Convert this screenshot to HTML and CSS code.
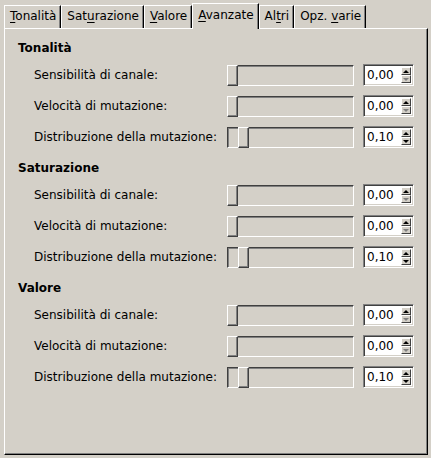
FILE: index.html
```html
<!DOCTYPE html>
<html lang="it">
<head>
<meta charset="utf-8">
<title>Avanzate</title>
<link rel="stylesheet" href="styles.css">
</head>
<body>
<div class="window">
  <div class="tabs">
    <div class="tab"><span class="u">T</span>onalità</div>
    <div class="tab">Sat<span class="u">u</span>razione</div>
    <div class="tab"><span class="u">V</span>alore</div>
    <div class="tab active"><span class="u">A</span>vanzate</div>
    <div class="tab">Al<span class="u">t</span>ri</div>
    <div class="tab">Opz. <span class="u">v</span>arie</div>
  </div>
  <div class="panel">
    <section class="group">
      <div class="heading">Tonalità</div>
      <div class="rows">
        <div class="row">
          <span class="label">Sensibilità di canale:</span>
          <div class="slider"><div class="handle" style="left:-1px"></div></div>
          <div class="spin"><span class="value">0,00</span><div class="btns"><div class="btn up"><i class="tri-up"></i></div><div class="btn dn off"><i class="tri-dn"></i></div></div></div>
        </div>
        <div class="row">
          <span class="label">Velocità di mutazione:</span>
          <div class="slider"><div class="handle" style="left:-1px"></div></div>
          <div class="spin"><span class="value">0,00</span><div class="btns"><div class="btn up"><i class="tri-up"></i></div><div class="btn dn off"><i class="tri-dn"></i></div></div></div>
        </div>
        <div class="row">
          <span class="label">Distribuzione della mutazione:</span>
          <div class="slider"><div class="handle" style="left:10px"></div></div>
          <div class="spin"><span class="value">0,10</span><div class="btns"><div class="btn up"><i class="tri-up"></i></div><div class="btn dn"><i class="tri-dn"></i></div></div></div>
        </div>
      </div>
    </section>
    <section class="group">
      <div class="heading">Saturazione</div>
      <div class="rows">
        <div class="row">
          <span class="label">Sensibilità di canale:</span>
          <div class="slider"><div class="handle" style="left:-1px"></div></div>
          <div class="spin"><span class="value">0,00</span><div class="btns"><div class="btn up"><i class="tri-up"></i></div><div class="btn dn off"><i class="tri-dn"></i></div></div></div>
        </div>
        <div class="row">
          <span class="label">Velocità di mutazione:</span>
          <div class="slider"><div class="handle" style="left:-1px"></div></div>
          <div class="spin"><span class="value">0,00</span><div class="btns"><div class="btn up"><i class="tri-up"></i></div><div class="btn dn off"><i class="tri-dn"></i></div></div></div>
        </div>
        <div class="row">
          <span class="label">Distribuzione della mutazione:</span>
          <div class="slider"><div class="handle" style="left:10px"></div></div>
          <div class="spin"><span class="value">0,10</span><div class="btns"><div class="btn up"><i class="tri-up"></i></div><div class="btn dn"><i class="tri-dn"></i></div></div></div>
        </div>
      </div>
    </section>
    <section class="group">
      <div class="heading">Valore</div>
      <div class="rows">
        <div class="row">
          <span class="label">Sensibilità di canale:</span>
          <div class="slider"><div class="handle" style="left:-1px"></div></div>
          <div class="spin"><span class="value">0,00</span><div class="btns"><div class="btn up"><i class="tri-up"></i></div><div class="btn dn off"><i class="tri-dn"></i></div></div></div>
        </div>
        <div class="row">
          <span class="label">Velocità di mutazione:</span>
          <div class="slider"><div class="handle" style="left:-1px"></div></div>
          <div class="spin"><span class="value">0,00</span><div class="btns"><div class="btn up"><i class="tri-up"></i></div><div class="btn dn off"><i class="tri-dn"></i></div></div></div>
        </div>
        <div class="row">
          <span class="label">Distribuzione della mutazione:</span>
          <div class="slider"><div class="handle" style="left:10px"></div></div>
          <div class="spin"><span class="value">0,10</span><div class="btns"><div class="btn up"><i class="tri-up"></i></div><div class="btn dn"><i class="tri-dn"></i></div></div></div>
        </div>
      </div>
    </section>
  </div>
</div>
</body>
</html>
```
FILE: styles.css
```css
html, body {
  margin: 0;
  padding: 0;
  background: #d4d0c8;
}
body {
  font-family: "DejaVu Sans", sans-serif;
  font-size: 12px;
  color: #000;
}
.window {
  box-sizing: border-box;
  height: 458px;
  width: 431px;
  padding: 3px 3px 3px 4px;
  display: flex;
  flex-direction: column;
}
.tabs {
  display: flex;
  align-items: flex-end;
  height: 25px;
  flex: none;
}
.tab {
  box-sizing: border-box;
  height: 23px;
  line-height: 21px;
  padding: 0 4px 0 5px;
  border-top: 1px solid #fff;
  border-left: 1px solid #fff;
  border-right: 1px solid #000;
  box-shadow: inset -1px 0 0 #808080;
  white-space: nowrap;
}
.tab.active {
  height: 26px;
  line-height: 23px;
  margin-bottom: -1px;
  background: #d4d0c8;
  position: relative;
  z-index: 1;
}
.u {
  text-decoration: underline;
  text-underline-offset: 2px;
}
.panel {
  flex: 1;
  box-sizing: border-box;
  border-top: 1px solid #fff;
  border-left: 1px solid #fff;
  border-right: 1px solid #000;
  border-bottom: 1px solid #000;
  box-shadow: inset -1px -1px 0 #808080;
  padding: 11px 0 0 13px;
  display: flex;
  flex-direction: column;
  gap: 12px;
}
.heading {
  font-weight: bold;
  line-height: 16px;
  height: 16px;
  margin-bottom: 8px;
}
.rows {
  display: flex;
  flex-direction: column;
  gap: 9px;
  margin-left: 16px;
}
.row {
  display: grid;
  grid-template-columns: 184px 127px 51px;
  column-gap: 9px;
  align-items: center;
  height: 22px;
}
.label {
  line-height: 16px;
  white-space: nowrap;
}
.slider {
  position: relative;
  box-sizing: border-box;
  height: 21px;
  border-top: 1px solid #404040;
  border-left: 1px solid #404040;
  border-bottom: 1px solid #fff;
  border-right: 1px solid #fff;
  box-shadow: inset 1px 1px 0 #808080;
  background: #d4d0c8;
}
.handle {
  position: absolute;
  top: -1px;
  bottom: -1px;
  width: 11px;
  box-sizing: border-box;
  border-top: 1px solid #fff;
  border-left: 1px solid #fff;
  border-right: 1px solid #404040;
  border-bottom: 1px solid #404040;
  box-shadow: inset -1px -1px 0 #808080;
  background: #d4d0c8;
}
.spin {
  box-sizing: border-box;
  height: 22px;
  display: flex;
  align-items: stretch;
  border-top: 1px solid #808080;
  border-left: 1px solid #808080;
  border-bottom: 1px solid #fff;
  border-right: 1px solid #fff;
  box-shadow: inset 1px 1px 0 #404040, inset -1px -1px 0 #d4d0c8;
  background: #fff;
}
.value {
  flex: 1;
  padding-left: 3px;
  line-height: 20px;
}
.btns {
  display: flex;
  flex-direction: column;
  width: 10px;
  margin: 2px 2px 2px 0;
}
.btn {
  flex: 1;
  box-sizing: border-box;
  background: #d4d0c8;
  border-top: 1px solid #fff;
  border-left: 1px solid #fff;
  border-right: 1px solid #404040;
  border-bottom: 1px solid #404040;
  display: flex;
  align-items: center;
  justify-content: center;
}
.tri-up, .tri-dn {
  display: block;
  width: 0;
  height: 0;
  border-left: 3px solid transparent;
  border-right: 3px solid transparent;
}
.tri-up {
  border-bottom: 3px solid #000;
}
.tri-dn {
  border-top: 3px solid #000;
}
.btn.off .tri-dn {
  border-top-color: #808080;
}
```
